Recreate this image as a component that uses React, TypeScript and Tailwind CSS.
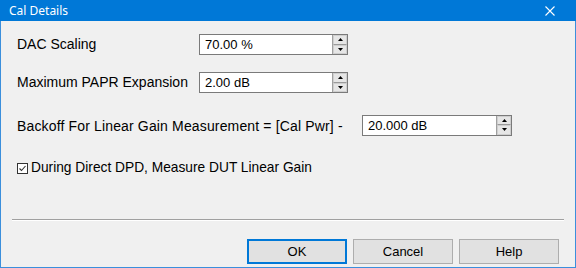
import React from "react";

function Spin({ value, width }: { value: string; width: number }) {
  return (
    <div className="flex h-[21px] border border-[#7a7a7a] bg-white" style={{ width }}>
      <div className="flex-1 flex items-center pl-[5px] text-[13px] text-black leading-none">{value}</div>
      <div className="w-[15px] h-full flex flex-col border-l border-[#a0a0a0] bg-[#e6e6e6]">
        <div className="flex-1 flex items-center justify-center border border-[#cfcfcf] border-b-[#9a9a9a]">
          <svg width="5" height="3" viewBox="0 0 5 3"><path d="M2.5 0 L5 3 L0 3 Z" fill="#000" /></svg>
        </div>
        <div className="flex-1 flex items-center justify-center border border-[#cfcfcf]">
          <svg width="5" height="3" viewBox="0 0 5 3"><path d="M0 0 L5 0 L2.5 3 Z" fill="#000" /></svg>
        </div>
      </div>
    </div>
  );
}

function Btn({ label, primary }: { label: string; primary?: boolean }) {
  return (
    <div
      className={
        "w-[100px] h-[25px] flex items-center justify-center text-[13px] text-black bg-[#e1e1e1] border " +
        (primary ? "border-[#0078d7] shadow-[inset_0_0_0_1px_#0078d7]" : "border-[#adadad]")
      }
    >
      {label}
    </div>
  );
}

export default function App() {
  return (
    <div
      className="w-[576px] h-[268px] flex flex-col bg-[#f0f0f0] border-x border-b border-[#3b8fdc]"
      style={{ fontFamily: '"Liberation Sans", Arial, sans-serif' }}
    >
      <div className="h-[21px] bg-[#0078d7] flex items-center justify-between pl-[9px] pr-[21px] -mx-px">
        <span className="text-white text-[12px]" style={{ fontFamily: '"Noto Sans", "Open Sans", sans-serif' }}>
          Cal Details
        </span>
        <svg width="10" height="10" viewBox="0 0 10 10">
          <path d="M0.5 0.5 L9.5 9.5 M9.5 0.5 L0.5 9.5" stroke="#fff" strokeWidth="1.1" />
        </svg>
      </div>

      <div className="flex flex-col pl-[16px]">
        <div className="flex items-center mt-[13px]">
          <div className="w-[182px] text-[14px] text-black">DAC Scaling</div>
          <Spin value="70.00 %" width={149} />
        </div>
        <div className="flex items-center mt-[17px]">
          <div className="w-[182px] text-[14px] text-black">Maximum PAPR Expansion</div>
          <Spin value="2.00 dB" width={149} />
        </div>
        <div className="flex items-center mt-[20px]">
          <div className="w-[345px] text-[14px] tracking-[0.15px] text-black pt-[3px]">Backoff For Linear Gain Measurement = [Cal Pwr] -</div>
          <Spin value="20.000 dB" width={150} />
        </div>
        <div className="flex items-center mt-[21px] gap-[3px] h-[20px]">
          <svg width="11" height="11" viewBox="0 0 11 11">
            <rect x="0.5" y="0.5" width="10" height="10" fill="#fff" stroke="#333" />
            <path d="M2.5 5.5 L4.5 7.5 L8.5 3" fill="none" stroke="#333" strokeWidth="1.1" />
          </svg>
          <span className="text-[13.75px] text-black">During Direct DPD, Measure DUT Linear Gain</span>
        </div>
      </div>

      <div className="mt-[41px] ml-[11px] mr-[11px] h-[2px] border-t border-[#a0a0a0] border-b border-b-white" />

      <div className="flex justify-end gap-[6px] mt-[18px] pr-[16px]">
        <Btn label="OK" primary />
        <Btn label="Cancel" />
        <Btn label="Help" />
      </div>
    </div>
  );
}
